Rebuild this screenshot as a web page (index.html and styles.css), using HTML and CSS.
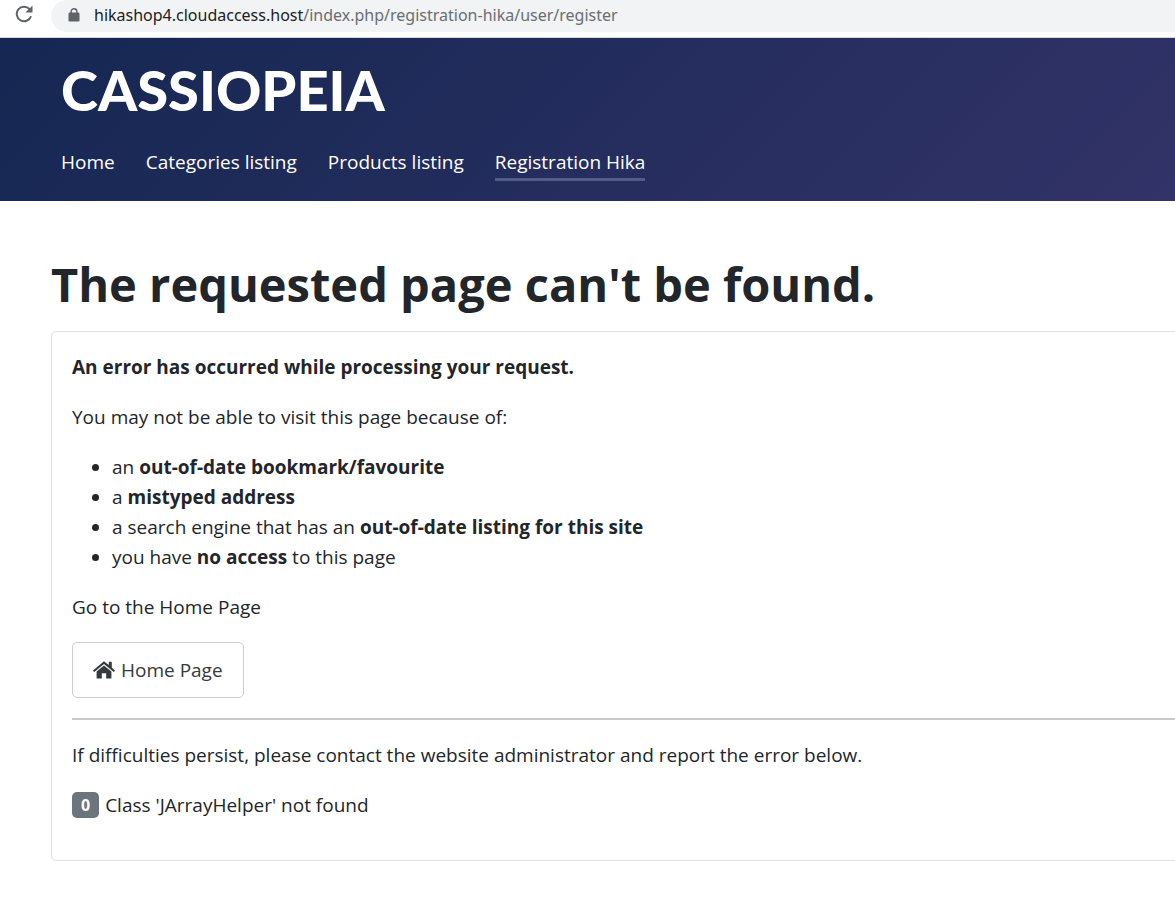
FILE: index.html
```html
<!DOCTYPE html>
<html lang="en">
<head>
  <meta charset="UTF-8">
  <meta name="viewport" content="width=device-width, initial-scale=1.0">
  <title>The requested page can't be found.</title>
  <link rel="stylesheet" href="styles.css">
</head>
<body>

  <!-- Browser bar -->
  <div class="browser-bar">
    <button type="button" class="reload-btn" aria-label="Reload">
      <svg width="18" height="18" viewBox="0 0 18 18">
        <path d="M14.6 4.2A7.3 7.3 0 1 0 16 11.2" fill="none" stroke="#5f6368" stroke-width="2"/>
        <path d="M17.5 0.5V7.6H10.4Z" fill="#5f6368"/>
      </svg>
    </button>
    <div class="address">
      <svg class="lock-icon" width="12" height="14" viewBox="0 0 12 14">
        <rect x="0.5" y="4.5" width="11" height="9" rx="1.2" fill="#5f6368"/>
        <path d="M3.2 5V3.4a2.8 2.6 0 0 1 5.6 0V5" fill="none" stroke="#5f6368" stroke-width="1.4"/>
      </svg>
      <span class="host">hikashop4.cloudaccess.host</span><span class="path">/index.php/registration-hika/user/register</span>
    </div>
  </div>

  <!-- Header -->
  <header class="header">
    <a class="brand" href="#">CASSIOPEIA</a>
    <nav class="nav-links">
      <a class="nav-link" href="#">Home</a>
      <a class="nav-link" href="#">Categories listing</a>
      <a class="nav-link" href="#">Products listing</a>
      <a class="nav-link active" href="#">Registration Hika</a>
    </nav>
  </header>

  <!-- Error page -->
  <main class="container">
    <h1>The requested page can't be found.</h1>
    <div class="card">
      <p><strong>An error has occurred while processing your request.</strong></p>
      <p>You may not be able to visit this page because of:</p>
      <ul>
        <li>an <strong>out-of-date bookmark/favourite</strong></li>
        <li>a <strong>mistyped address</strong></li>
        <li>a search engine that has an <strong>out-of-date listing for this site</strong></li>
        <li>you have <strong>no access</strong> to this page</li>
      </ul>
      <p>Go to the Home Page</p>
      <a class="home-btn" href="#">
        <svg width="22" height="18" viewBox="0 0 22 18" fill="#343a40">
          <path d="M11 0.3 0.3 9.2a.5.5 0 0 0 0 .7l.6.8c.2.2.5.2.7 0L11 2.9l9.4 7.8c.2.2.5.2.7 0l.6-.8a.5.5 0 0 0 0-.7L18.8 6.7V1.2a.5.5 0 0 0-.5-.5h-2a.5.5 0 0 0-.5.5v2.9Z"/>
          <path d="M11 4.4 3.6 10.5V17a.6.6 0 0 0 .6.6h4.6V12.3h4.4v5.3h4.6a.6.6 0 0 0 .6-.6v-6.5Z"/>
        </svg>
        <span>Home Page</span>
      </a>
      <hr>
      <p>If difficulties persist, please contact the website administrator and report the error below.</p>
      <p class="error-line"><span class="badge">0</span> <span>Class 'JArrayHelper' not found</span></p>
    </div>
  </main>

</body>
</html>
```
FILE: styles.css
```css
/* General Styles */
* {
  box-sizing: border-box;
}

body {
  margin: 0;
  font-family: "Open Sans", "Noto Sans", sans-serif;
  font-size: 19px;
  line-height: 30px;
  color: #22262a;
  background-color: #fff;
  overflow-x: hidden;
}

/* Browser bar */
.browser-bar {
  display: flex;
  align-items: flex-start;
  height: 38px;
  padding-left: 15px;
  border-bottom: 1px solid #d5d8db;
}

.reload-btn {
  display: flex;
  margin: 0 18px 0 0;
  padding: 5px 0 0;
  border: none;
  background: none;
  cursor: pointer;
}

.address {
  flex: 1;
  display: flex;
  align-items: center;
  height: 32px;
  padding: 0 0 2px 17px;
  border-radius: 16px 0 0 16px;
  background-color: #f1f3f4;
  font-family: "Noto Sans", sans-serif;
  font-size: 16px;
  white-space: nowrap;
}

.lock-icon {
  margin-right: 14px;
}

.host {
  color: #202124;
}

.path {
  color: #6a6e73;
}

/* Header */
.header {
  padding: 20px 61px;
  background-image: linear-gradient(135deg, #152752 0%, #35346a 110%);
}

.brand {
  display: block;
  margin-bottom: 25px;
  font-family: Lato, sans-serif;
  font-size: 56px;
  font-weight: 900;
  line-height: 64px;
  color: #fff;
  text-decoration: none;
}

.nav-links {
  display: flex;
  gap: 31px;
}

.nav-link {
  padding-bottom: 1px;
  border-bottom: 3px solid transparent;
  color: #fff;
  text-decoration: none;
}

.nav-link.active {
  border-bottom-color: #545b87;
}

/* Error page */
.container {
  padding: 48px 0 38px 51px;
}

h1 {
  margin: 0 0 12px;
  font-size: 47px;
  line-height: 70px;
}

.card {
  margin-right: -24px;
  padding: 20px;
  border: 1px solid #dfdfdf;
  border-radius: 5px;
}

p, ul {
  margin: 0 0 20px;
}

ul {
  padding-left: 40px;
}

.home-btn {
  display: inline-flex;
  align-items: center;
  gap: 6px;
  height: 56px;
  padding: 0 20px;
  border: 1px solid #cdcdcd;
  border-radius: 5px;
  color: #343a40;
  text-decoration: none;
  vertical-align: top;
}

hr {
  margin: 20px 0;
  border: none;
  border-top: 2px solid #c8c8c8;
}

.error-line {
  display: flex;
  align-items: center;
  gap: 6px;
}

.badge {
  padding: 0 9px;
  border-radius: 5px;
  background-color: #6c757d;
  color: #fff;
  font-size: 16px;
  font-weight: bold;
  line-height: 26px;
}
```
